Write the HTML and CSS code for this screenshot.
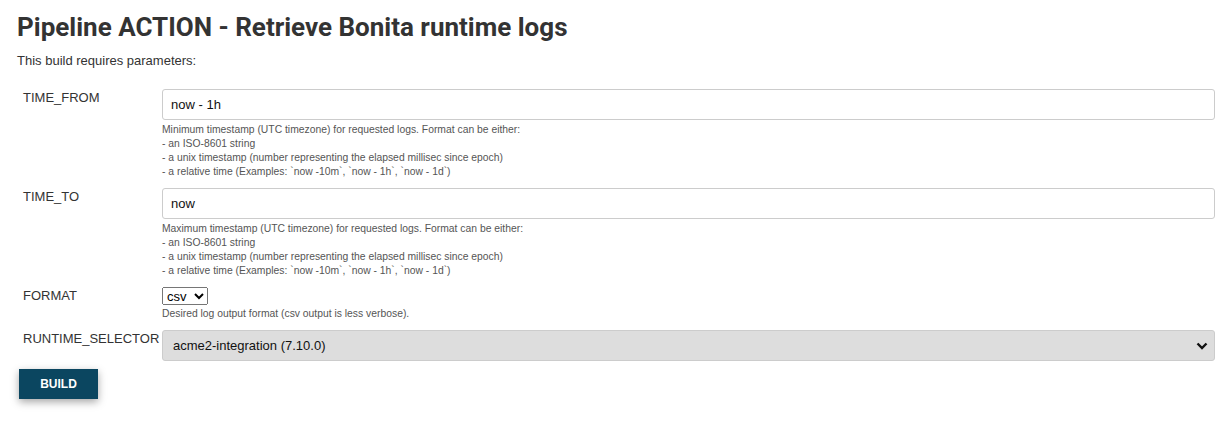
FILE: index.html
```html
<!DOCTYPE html>
<html>
<head>
<meta charset="utf-8">
<link rel="stylesheet" href="styles.css">
</head>
<body>
<div class="page">
  <h1 class="title">Pipeline ACTION - Retrieve Bonita runtime logs</h1>
  <p class="intro">This build requires parameters:</p>
  <form class="params">
    <div class="row">
      <div class="label">TIME_FROM</div>
      <div class="field">
        <input class="text" type="text" value="now - 1h">
        <div class="help">Minimum timestamp (UTC timezone) for requested logs. Format can be either:<br>- an ISO-8601 string<br>- a unix timestamp (number representing the elapsed millisec since epoch)<br>- a relative time (Examples: `now -10m`, `now - 1h`, `now - 1d`)</div>
      </div>
    </div>
    <div class="row">
      <div class="label">TIME_TO</div>
      <div class="field">
        <input class="text" type="text" value="now">
        <div class="help">Maximum timestamp (UTC timezone) for requested logs. Format can be either:<br>- an ISO-8601 string<br>- a unix timestamp (number representing the elapsed millisec since epoch)<br>- a relative time (Examples: `now -10m`, `now - 1h`, `now - 1d`)</div>
      </div>
    </div>
    <div class="row">
      <div class="label">FORMAT</div>
      <div class="field">
        <select class="small-select"><option>csv</option><option>json</option></select>
        <div class="help help-tight">Desired log output format (csv output is less verbose).</div>
      </div>
    </div>
    <div class="row">
      <div class="label">RUNTIME_SELECTOR</div>
      <div class="field">
        <div class="big-select"><span>acme2-integration (7.10.0)</span><svg class="chev" width="12" height="8" viewBox="0 0 12 8"><path d="M1.5 1.5 L6 6 L10.5 1.5" fill="none" stroke="#111" stroke-width="2.4"/></svg></div>
      </div>
    </div>
    <div class="actions"><button type="button" class="build">BUILD</button></div>
  </form>
</div>
</body>
</html>
```
FILE: styles.css
```css
html, body { margin: 0; padding: 0; background: #fff; }
body { font-family: "Liberation Sans", Arial, sans-serif; color: #333; }
.page { padding: 0 12px 30px 17px; }
.title {
  font-family: Roboto, "Liberation Sans", sans-serif;
  font-weight: 700;
  font-size: 26px;
  line-height: 32px;
  margin: 0;
  padding-top: 11px;
  color: #333;
}
.intro { font-size: 13px; line-height: 16px; margin: 10px 0 0 0; }
.params { margin-top: 20px; padding-left: 6px; }
.row { display: grid; grid-template-columns: 139px 1fr; margin-bottom: 9px; }
.label { font-size: 13px; line-height: 15px; padding-top: 1px; color: #333; }
.field { min-width: 0; }
.text {
  display: block;
  box-sizing: border-box;
  width: 100%;
  height: 31px;
  border: 1px solid #ccc;
  border-radius: 3px;
  padding: 0 8px;
  font-family: "Liberation Sans", Arial, sans-serif;
  font-size: 13px;
  color: #111;
}
.help { font-size: 10.35px; line-height: 14px; color: #555; margin-top: 3px; }
.help-tight { margin-top: 2px; }
.small-select {
  display: block;
  font-family: "Liberation Sans", Arial, sans-serif;
  font-size: 13px;
  height: 18px;
}
.big-select {
  box-sizing: border-box;
  height: 31px;
  display: flex;
  align-items: center;
  justify-content: space-between;
  background: #ddd;
  border: 1px solid #ccc;
  border-radius: 3px;
  padding: 0 6px 0 10px;
  font-size: 13px;
  color: #111;
}
.chev { display: block; }
.actions { display: flex; margin-left: -4px; margin-top: -1px; }
.build {
  width: 79px;
  height: 30px;
  border: none;
  background: #0b4660;
  color: #fff;
  font-family: "Liberation Sans", Arial, sans-serif;
  font-weight: 700;
  font-size: 12px;
  box-shadow: 0 3px 8px rgba(0,0,0,0.35);
  cursor: pointer;
}
```
